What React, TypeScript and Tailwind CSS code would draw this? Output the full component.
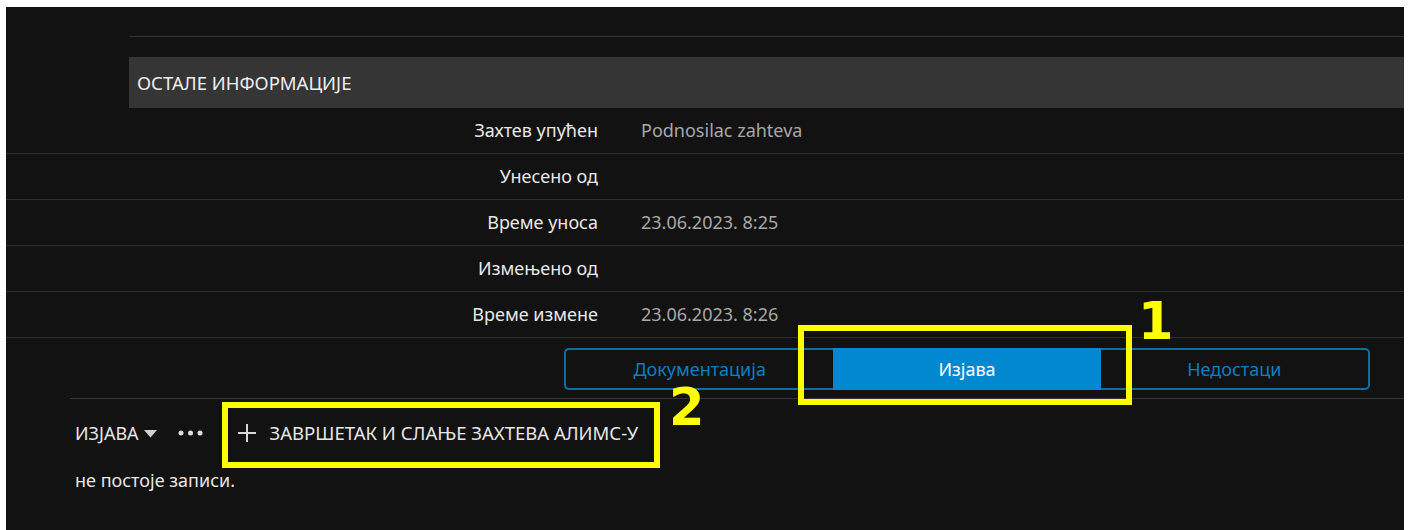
const rows = [
  { label: 'Захтев упућен', value: 'Podnosilac zahteva' },
  { label: 'Унесено од', value: '' },
  { label: 'Време уноса', value: '23.06.2023. 8:25' },
  { label: 'Измењено од', value: '' },
  { label: 'Време измене', value: '23.06.2023. 8:26' },
]

export default function App() {
  return (
    <div className="h-[530px] bg-white pt-[7px] pl-[6px] pr-[7px] font-['Noto_Sans',sans-serif]">
      <div className="relative h-full bg-[#121212] text-[#e6e6e6]">
        {/* section header */}
        <div className="pt-[29px] pl-[123px]">
          <div className="h-px bg-[#333333]" />
          <div className="mt-[20px] flex h-[51px] items-center bg-[#353535] px-2 text-[18.5px] text-[#eeeeee]">
            ОСТАЛЕ ИНФОРМАЦИЈЕ
          </div>
        </div>

        {/* info rows */}
        <div>
          {rows.map((row) => (
            <div key={row.label} className="flex h-[46px] items-center border-b border-[#2f2f2f] text-[18px]">
              <div className="w-[592px] text-right text-[#e8e8e8]">{row.label}</div>
              <div className="pl-[43px] text-[#a8a8a8]">{row.value}</div>
            </div>
          ))}
        </div>

        {/* tabs */}
        <div className="mt-[10px] ml-[558px] flex h-[42px] w-[806px] text-[18px]">
          <div className="flex flex-1 items-center justify-center rounded-l-[5px] border-2 border-r-0 border-[#0b6ea6] text-[#0b7fc2]">
            Документација
          </div>
          <div className="flex flex-1 items-center justify-center bg-[#0288d1] text-white">Изјава</div>
          <div className="flex flex-1 items-center justify-center rounded-r-[5px] border-2 border-l-0 border-[#0b6ea6] text-[#0b7fc2]">
            Недостаци
          </div>
        </div>

        <div className="mt-[8px] ml-[64px] h-px bg-[#333333]" />

        {/* toolbar */}
        <div className="flex h-[68px] items-center pl-[69px] text-[18px] text-[#e6e6e6]">
          <span>ИЗЈАВА</span>
          <svg width="13" height="8" viewBox="0 0 13 8" className="ml-[5px] mt-[1px]">
            <path d="M0 0h13L6.5 7.5z" fill="#cfcfcf" />
          </svg>
          <svg width="25" height="6" viewBox="0 0 25 6" className="ml-[21px]">
            <circle cx="3" cy="3" r="2.5" fill="#dddddd" />
            <circle cx="12.5" cy="3" r="2.5" fill="#dddddd" />
            <circle cx="22" cy="3" r="2.5" fill="#dddddd" />
          </svg>
          <svg width="18" height="18" viewBox="0 0 18 18" className="ml-[35px]">
            <path d="M9 0v18M0 9h18" stroke="#d8d8d8" strokeWidth="2" />
          </svg>
          <span className="ml-[14px] text-[18.5px]">ЗАВРШЕТАК И СЛАЊЕ ЗАХТЕВА АЛИМС-У</span>
        </div>

        <div className="pl-[69px] text-[18px] text-[#e6e6e6]">не постоје записи.</div>

        {/* callouts */}
        <div className="absolute left-[792px] top-[318px] h-[80px] w-[334px] border-[6px] border-[#ffff00]" />
        <div className="absolute left-[1132px] top-[289px] text-[51px] leading-none font-bold text-[#ffff00] font-['DejaVu_Sans',sans-serif]">1</div>
        <div className="absolute left-[216px] top-[395px] h-[66px] w-[438px] border-[6px] border-[#ffff00]" />
        <div className="absolute left-[663px] top-[375px] text-[51px] leading-none font-bold text-[#ffff00] font-['DejaVu_Sans',sans-serif]">2</div>
      </div>
    </div>
  )
}
